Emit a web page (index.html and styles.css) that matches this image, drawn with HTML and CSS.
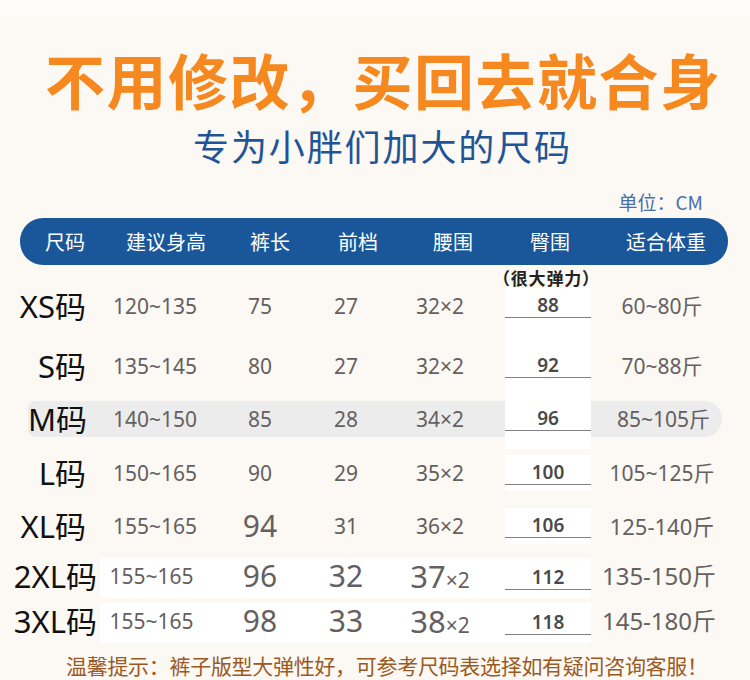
FILE: index.html
```html
<!DOCTYPE html>
<html lang="zh-CN">
<head>
<meta charset="utf-8">
<title>尺码表</title>
<link rel="stylesheet" href="styles.css">
</head>
<body>
<div class="page">
  <h1 class="title">不用修改，买回去就合身</h1>
  <p class="subtitle">专为小胖们加大的尺码</p>
  <p class="unit">单位：CM</p>
  <div class="thead">
    <span>尺码</span>
    <span>建议身高</span>
    <span>裤长</span>
    <span>前档</span>
    <span>腰围</span>
    <span>臀围</span>
    <span class="th-wt">适合体重</span>
  </div>
  <div class="note">（很大弹力）</div>

  <div class="row r-xs">
    <span class="c lbl">XS码</span>
    <span class="c h">120~135</span>
    <span class="c len">75</span>
    <span class="c rise">27</span>
    <span class="c waist">32×2</span>
    <span class="c hip ext-24"><b>88</b></span>
    <span class="c wt">60~80斤</span>
  </div>
  <div class="row r-s">
    <span class="c lbl">S码</span>
    <span class="c h">135~145</span>
    <span class="c len">80</span>
    <span class="c rise">27</span>
    <span class="c waist">32×2</span>
    <span class="c hip ext-17"><b>92</b></span>
    <span class="c wt">70~88斤</span>
  </div>
  <div class="row r-m">
    <span class="c lbl">M码</span>
    <span class="c h">140~150</span>
    <span class="c len">85</span>
    <span class="c rise">28</span>
    <span class="c waist">34×2</span>
    <span class="c hip ext-12"><b>96</b></span>
    <span class="c wt">85~105斤</span>
  </div>
  <div class="row r-l">
    <span class="c lbl">L码</span>
    <span class="c h">150~165</span>
    <span class="c len">90</span>
    <span class="c rise">29</span>
    <span class="c waist">35×2</span>
    <span class="c hip"><b>100</b></span>
    <span class="c wt">105~125斤</span>
  </div>
  <div class="row r-xl">
    <span class="c lbl">XL码</span>
    <span class="c h">155~165</span>
    <span class="c len big">94</span>
    <span class="c rise">31</span>
    <span class="c waist">36×2</span>
    <span class="c hip"><b>106</b></span>
    <span class="c wt wt-xl">125-140斤</span>
  </div>
  <div class="row wide r-2xl">
    <span class="c lbl">2XL码</span>
    <span class="c h">155~165</span>
    <span class="c len big">96</span>
    <span class="c rise big">32</span>
    <span class="c waist"><span class="big-in">37</span>×2</span>
    <span class="c hip"><b>112</b></span>
    <span class="c wt wt-big">135-150斤</span>
  </div>
  <div class="row wide r-3xl">
    <span class="c lbl">3XL码</span>
    <span class="c h">155~165</span>
    <span class="c len big">98</span>
    <span class="c rise big">33</span>
    <span class="c waist"><span class="big-in">38</span>×2</span>
    <span class="c hip"><b>118</b></span>
    <span class="c wt wt-big">145-180斤</span>
  </div>

  <p class="foot">温馨提示：裤子版型大弹性好，可参考尺码表选择如有疑问咨询客服！</p>
</div>
</body>
</html>
```

FILE: styles.css
```css
* {
  box-sizing: border-box;
  margin: 0;
  padding: 0;
}

html,
body {
  background: #fcf8f3;
}

body {
  width: 750px;
  font-family: "Noto Sans", "Noto Sans CJK SC", sans-serif;
}

.page {
  min-height: 680px;
  background: linear-gradient(#fefdfc 0, #fefdfc 15px, #fcf8f3 19px);
}

.title {
  font-family: "Noto Sans CJK SC", sans-serif;
  font-weight: 700;
  font-size: 60px;
  line-height: 60px;
  letter-spacing: 1.5px;
  color: #f5891f;
  padding-top: 49px;
  padding-left: 45px;
  white-space: nowrap;
}

.subtitle {
  font-family: "Noto Sans CJK SC", sans-serif;
  font-size: 36px;
  line-height: 36px;
  letter-spacing: 1.9px;
  color: #1f5597;
  margin-top: 18px;
  padding-left: 193px;
}

.unit {
  font-family: "Noto Sans CJK SC", sans-serif;
  font-size: 19px;
  line-height: 20px;
  color: #4770aa;
  text-align: right;
  padding-right: 47px;
  margin-top: 29px;
}

.thead {
  margin: 6px 0 0 20px;
  width: 708px;
  height: 47px;
  border-radius: 23px;
  background: #1a579a;
  display: grid;
  grid-template-columns: 90px 112px 96px 80px 110px 84px 1fr;
  color: #fff;
  font-family: "Noto Sans CJK SC", sans-serif;
  font-size: 20px;
  line-height: 47px;
  text-align: center;
}

.th-wt {
  padding-left: 12px;
}

.note {
  margin-top: 2px;
  height: 21px;
  line-height: 21px;
  padding-left: 493px;
  font-family: "Noto Sans CJK SC", sans-serif;
  font-size: 17px;
  letter-spacing: 0.8px;
  font-weight: 700;
  color: #222;
  white-space: nowrap;
}

.row {
  display: grid;
  grid-template-columns: 100px 110px 100px 72px 123px 86px 142px;
  height: 36px;
  color: #646060;
  font-size: 21px;
}

.c {
  text-align: center;
  line-height: 36px;
  white-space: nowrap;
}

.lbl {
  text-align: right;
  padding-right: 14px;
  font-size: 31px;
  color: #111;
}

.waist {
  padding-right: 7px;
  font-size: 21px;
}

.big {
  font-size: 30px;
}

.big-in {
  font-size: 31px;
}

.hip {
  background: #fff;
  display: flex;
  align-items: center;
}

.hip b {
  display: block;
  width: 100%;
  line-height: 23px;
  border-bottom: 1.5px solid #808080;
  font-size: 19px;
  font-weight: 600;
  color: #4a4a4a;
}

.ext-24 {
  padding-bottom: 24px;
  margin-bottom: -24px;
}

.ext-17 {
  padding-bottom: 17px;
  margin-bottom: -17px;
}

.ext-12 {
  padding-bottom: 12px;
  margin-bottom: -12px;
}

.wt {
  font-size: 21px;
}

.wt-xl {
  font-size: 22px;
}

.wt-big {
  font-size: 24px;
  padding-right: 6px;
}

.r-s {
  margin-top: 24px;
}

.r-m {
  margin-top: 17px;
  margin-left: 28px;
  width: 694px;
  grid-template-columns: 72px 110px 100px 72px 123px 86px 1fr;
  background: #ececec;
  border-radius: 8px 18px 18px 8px;
}

.r-m .wt {
  padding-left: 14px;
}

.r-l {
  margin-top: 18px;
}

.r-xl {
  margin-top: 17px;
}

.r-2xl {
  margin-top: 14px;
}

.r-3xl {
  margin-top: 9px;
}

.wide .lbl {
  padding-right: 3px;
}

.wide .h,
.wide .len,
.wide .rise,
.wide .waist {
  background: #fff;
}

.wide .h {
  padding-right: 7px;
}

.foot {
  margin-top: 15px;
  font-family: "Noto Sans CJK SC", sans-serif;
  font-size: 21px;
  line-height: 22px;
  letter-spacing: -0.3px;
  color: #9b5a23;
  padding-left: 66px;
  white-space: nowrap;
}
```
